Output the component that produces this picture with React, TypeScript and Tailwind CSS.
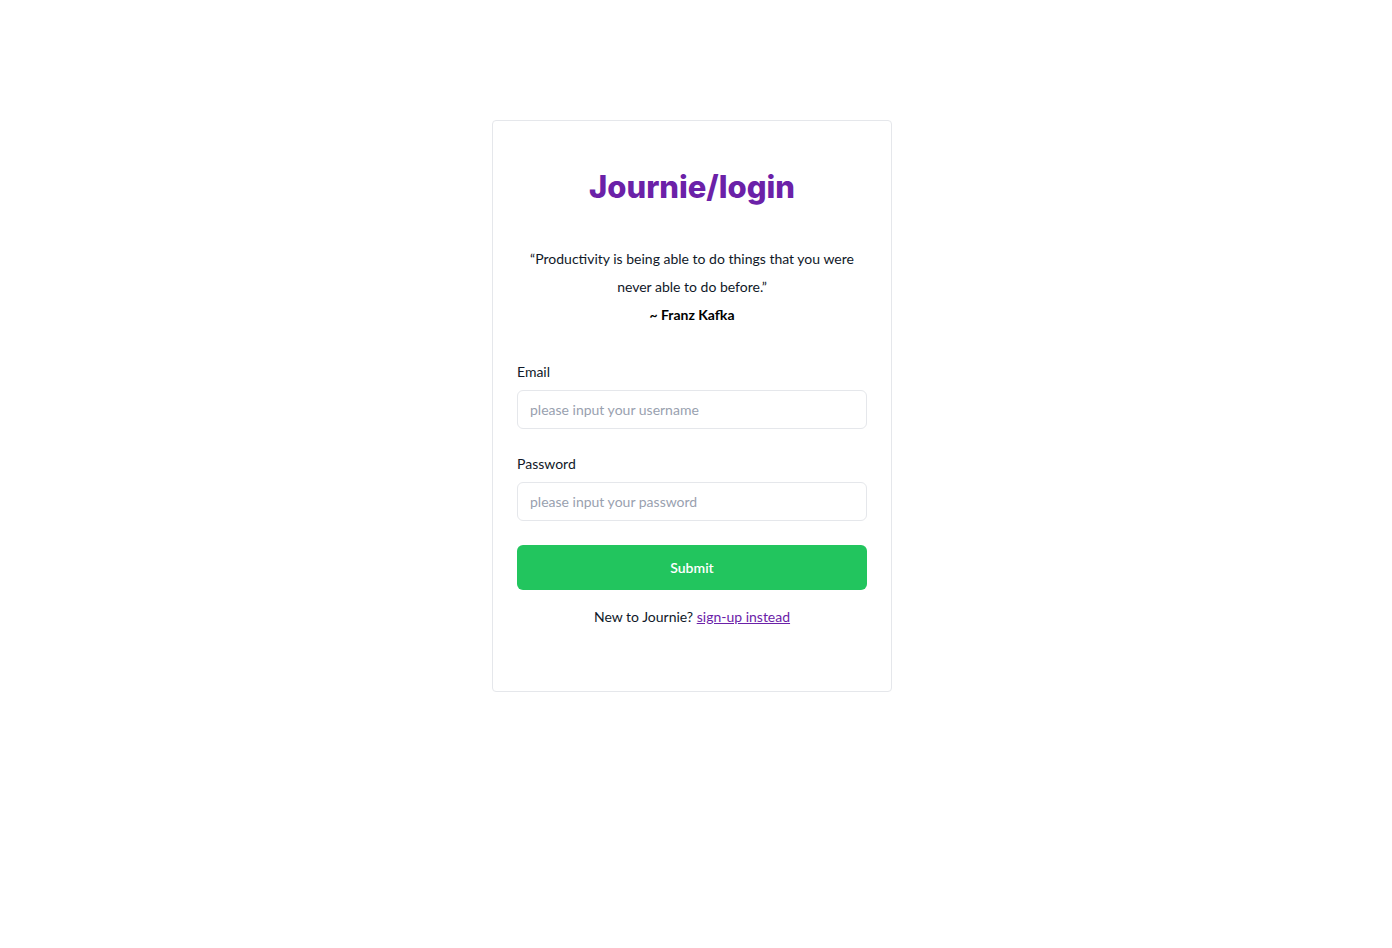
import React from 'react'

function Login() {
    return (
        <div className='min-h-screen w-full bg-white flex justify-center pt-[120px] pr-2' style={{ fontFamily: 'Lato, "Open Sans", sans-serif' }}>
            <div className='w-[400px] h-[572px] border border-gray-200 rounded-sm px-6 pt-12 flex flex-col'>

                <h1 className='text-center text-[31px] leading-9 font-extrabold text-[#6b21a8]' style={{ fontFamily: 'Inter, sans-serif' }}>
                    Journie/login
                </h1>

                <div className='mt-10 text-center text-sm leading-7 text-gray-900'>
                    <p>“Productivity is being able to do things that you were never able to do before.”</p>
                    <p className='font-bold text-black'>~ Franz Kafka</p>
                </div>

                <label className='mt-[33px] mb-2 text-sm leading-5 text-gray-900'>Email</label>
                <input
                    type='text'
                    placeholder='please input your username'
                    className='h-[39px] w-full border border-gray-200 rounded-md px-3 text-sm text-gray-900 placeholder:text-gray-400 outline-none'
                />

                <label className='mt-[25px] mb-2 text-sm leading-5 text-gray-900'>Password</label>
                <input
                    type='password'
                    placeholder='please input your password'
                    className='h-[39px] w-full border border-gray-200 rounded-md px-3 text-sm text-gray-900 placeholder:text-gray-400 outline-none'
                />

                <button className='mt-6 h-[45px] w-full rounded-md bg-[#22c55e] text-white text-sm font-semibold'>
                    Submit
                </button>

                <p className='mt-[17px] text-center text-sm leading-5 text-gray-900'>
                    New to Journie? <a href='#' className='text-[#6b21a8] underline'>sign-up instead</a>
                </p>

            </div>
        </div>
    )
}

export default function App() {
    return <Login />
}
